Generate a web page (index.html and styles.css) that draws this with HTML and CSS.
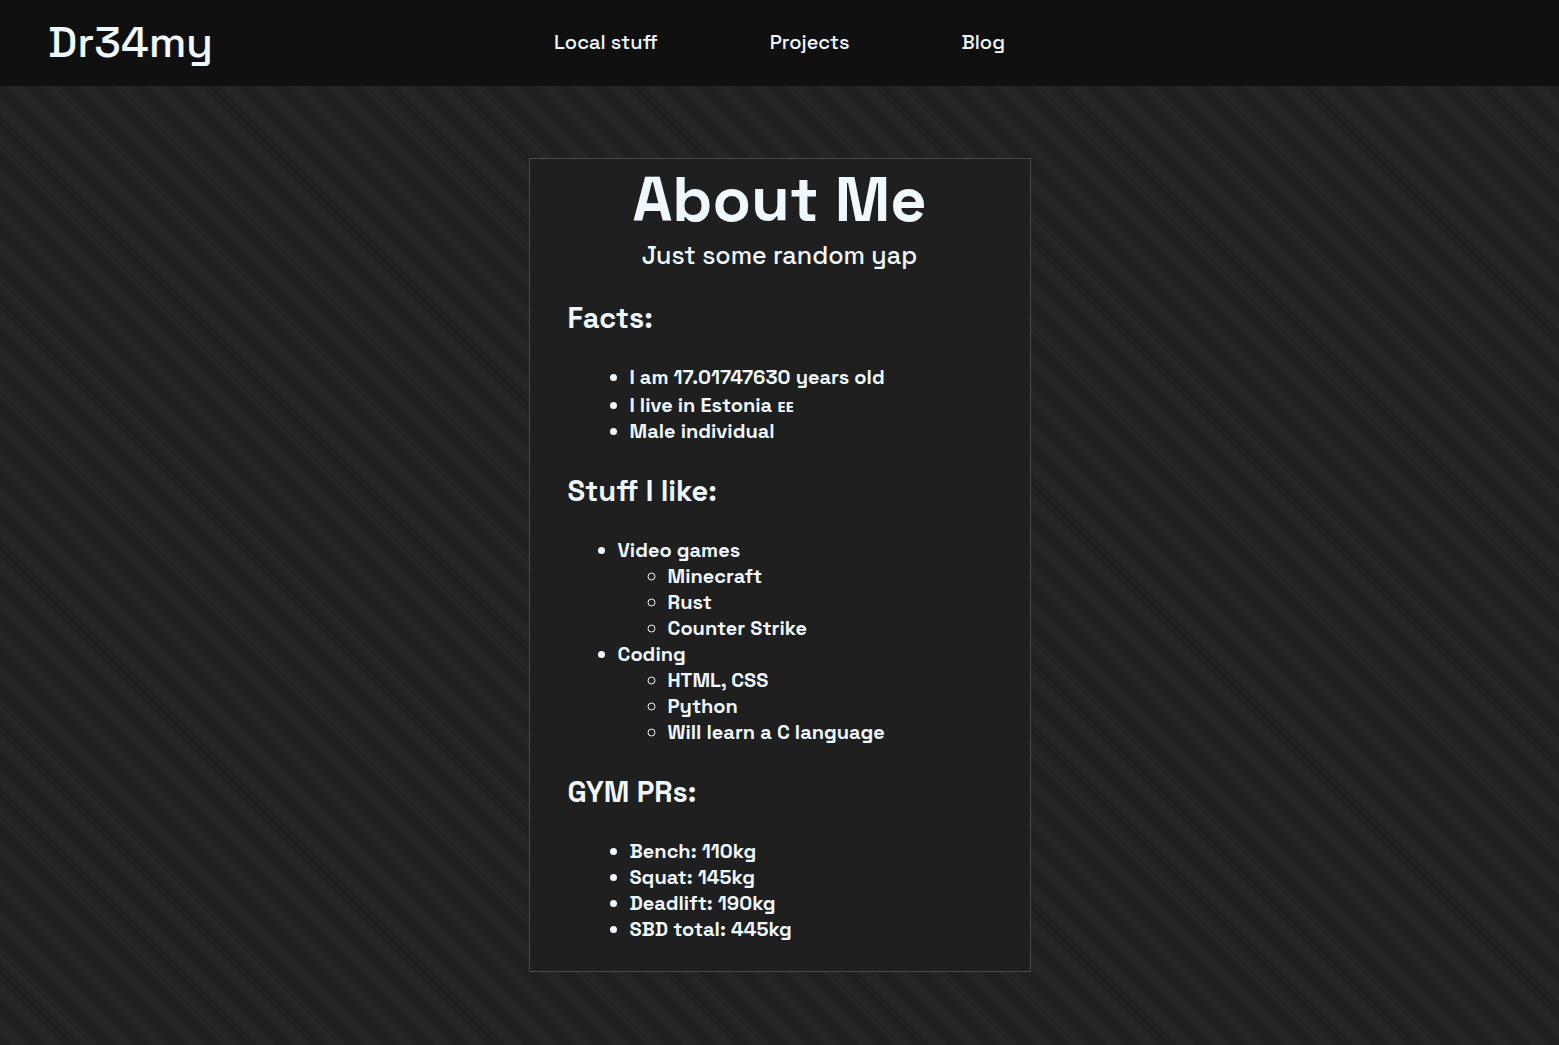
FILE: index.html
```html
<!DOCTYPE html>
<html lang="en">
<head>
<meta charset="utf-8">
<title>Dr34my</title>
<link rel="stylesheet" href="styles.css">
</head>
<body>
<header class="topbar">
  <a class="brand" href="#">Dr34my</a>
  <nav class="menu">
    <a href="#">Local stuff</a>
    <a href="#">Projects</a>
    <a href="#">Blog</a>
  </nav>
</header>
<main class="page">
  <article class="card">
    <h1 class="title">About Me</h1>
    <p class="tagline">Just some random yap</p>
    <h2 class="heading">Facts:</h2>
    <ul class="list list-inset">
      <li>I am 17.01747630 years old</li>
      <li class="origin">I live in Estonia <small class="country">EE</small></li>
      <li>Male individual</li>
    </ul>
    <h2 class="heading">Stuff I like:</h2>
    <ul class="list">
      <li>Video games
        <ul class="sublist">
          <li>Minecraft</li>
          <li>Rust</li>
          <li>Counter Strike</li>
        </ul>
      </li>
      <li>Coding
        <ul class="sublist">
          <li>HTML, CSS</li>
          <li>Python</li>
          <li>Will learn a C language</li>
        </ul>
      </li>
    </ul>
    <h2 class="heading">GYM PRs:</h2>
    <ul class="list list-inset">
      <li>Bench: 110kg</li>
      <li>Squat: 145kg</li>
      <li>Deadlift: 190kg</li>
      <li>SBD total: 445kg</li>
    </ul>
  </article>
</main>
</body>
</html>
```
FILE: styles.css
```css
* { box-sizing: border-box; }

body {
  margin: 0;
  min-height: 100vh;
  color: aliceblue;
  font-family: "Space Grotesk", Inter, "Liberation Sans", sans-serif;
  background: repeating-linear-gradient(45deg, #202020 0 8px, #252525 8px 20px, #202020 20px 25px);
}

.topbar {
  display: grid;
  grid-template-columns: 1fr auto 1fr;
  align-items: center;
  padding: 0 48px 2px;
  height: 86px;
  background: #101010;
}

.topbar a { color: inherit; text-decoration: none; }
.brand { font-size: 44px; font-weight: 500; line-height: 56px; }
.menu { display: flex; gap: 112px; font-size: 20px; font-weight: 500; line-height: 26px; }

.page { display: flex; justify-content: center; padding: 72px 16px; }

.card {
  width: 502px;
  padding: 0 38px 29px;
  border: 1px solid #484848;
  background: #1f1f1f;
}

.title { margin: 0; font-size: 63px; font-weight: 700; line-height: 80px; text-align: center; }
.tagline { margin: 0; font-size: 25px; font-weight: 500; line-height: 32px; text-align: center; }
.heading { margin: 28px 0; font-size: 29px; font-weight: 700; line-height: 37px; }
.list { margin: 0; padding-left: 50px; font-size: 20px; font-weight: 600; line-height: 26px; }
.list-inset { padding-left: 62px; }
.sublist { margin: 0; padding-left: 50px; }
.origin { padding-top: 2px; }
.country { font-family: "Open Sans", sans-serif; font-size: 15px; font-weight: 700; line-height: 1; }
```
